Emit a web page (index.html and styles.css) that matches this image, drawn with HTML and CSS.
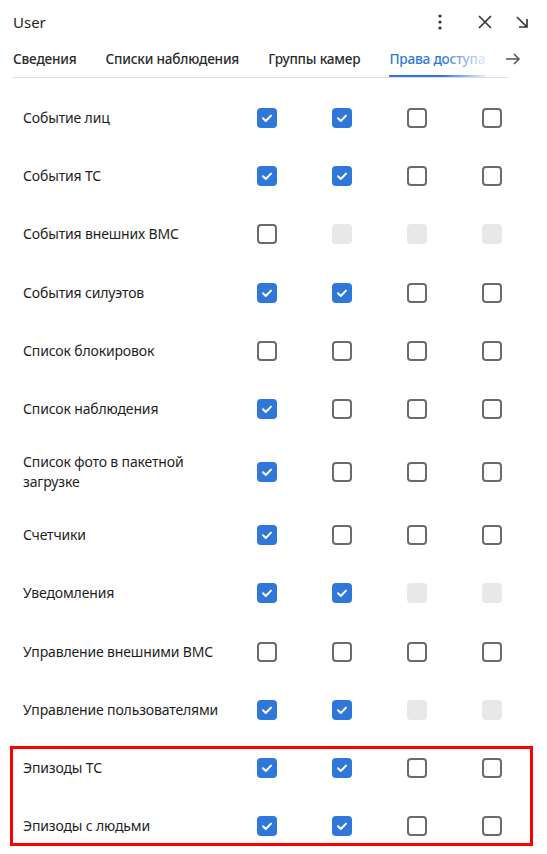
FILE: index.html
```html
<!DOCTYPE html>
<html lang="ru">
<head>
<meta charset="utf-8">
<title>User</title>
<link rel="stylesheet" href="styles.css">
</head>
<body>
<div class="panel">
  <header class="header">
    <div class="title">User</div>
    <div class="actions">
      <span class="icon icon-more">
        <svg width="24" height="24" viewBox="0 0 24 24"><circle cx="12" cy="6" r="1.6" fill="#333"/><circle cx="12" cy="12" r="1.6" fill="#333"/><circle cx="12" cy="18" r="1.6" fill="#333"/></svg>
      </span>
      <span class="icon icon-close">
        <svg width="24" height="24" viewBox="0 0 24 24"><path d="M6 6 L18 18 M18 6 L6 18" stroke="#333" stroke-width="1.6" fill="none"/></svg>
      </span>
      <span class="icon icon-dock">
        <svg width="24" height="24" viewBox="0 0 24 24"><path d="M7 7 L16.5 16.5 M17 9 V17 H9" stroke="#333" stroke-width="1.6" fill="none"/></svg>
      </span>
    </div>
  </header>

  <nav class="tabbar">
    <div class="tabs">
      <span class="tab">Сведения</span>
      <span class="tab">Списки наблюдения</span>
      <span class="tab">Группы камер</span>
      <span class="tab active">Права доступа</span>
    </div>
    <span class="tab-next">
      <svg width="18" height="18" viewBox="0 0 18 18"><path d="M2 9 H15 M10 4 L15 9 L10 14" stroke="#555" stroke-width="1.5" fill="none"/></svg>
    </span>
  </nav>

  <div class="rows">
    <div class="row"><span class="label">Событие лиц</span><span class="cb on"></span><span class="cb on"></span><span class="cb"></span><span class="cb"></span></div>
    <div class="row"><span class="label">События ТС</span><span class="cb on"></span><span class="cb on"></span><span class="cb"></span><span class="cb"></span></div>
    <div class="row"><span class="label">События внешних ВМС</span><span class="cb"></span><span class="cb off"></span><span class="cb off"></span><span class="cb off"></span></div>
    <div class="row"><span class="label">События силуэтов</span><span class="cb on"></span><span class="cb on"></span><span class="cb"></span><span class="cb"></span></div>
    <div class="row"><span class="label">Список блокировок</span><span class="cb"></span><span class="cb"></span><span class="cb"></span><span class="cb"></span></div>
    <div class="row"><span class="label">Список наблюдения</span><span class="cb on"></span><span class="cb"></span><span class="cb"></span><span class="cb"></span></div>
    <div class="row"><span class="label">Список фото в пакетной загрузке</span><span class="cb on"></span><span class="cb"></span><span class="cb"></span><span class="cb"></span></div>
    <div class="row"><span class="label">Счетчики</span><span class="cb on"></span><span class="cb"></span><span class="cb"></span><span class="cb"></span></div>
    <div class="row"><span class="label">Уведомления</span><span class="cb on"></span><span class="cb on"></span><span class="cb off"></span><span class="cb off"></span></div>
    <div class="row"><span class="label">Управление внешними ВМС</span><span class="cb"></span><span class="cb"></span><span class="cb"></span><span class="cb"></span></div>
    <div class="row"><span class="label">Управление пользователями</span><span class="cb on"></span><span class="cb on"></span><span class="cb off"></span><span class="cb off"></span></div>
    <div class="row"><span class="label">Эпизоды ТС</span><span class="cb on"></span><span class="cb on"></span><span class="cb"></span><span class="cb"></span></div>
    <div class="row"><span class="label">Эпизоды с людьми</span><span class="cb on"></span><span class="cb on"></span><span class="cb"></span><span class="cb"></span></div>
  </div>

  <div class="highlight"></div>
</div>
</body>
</html>
```

FILE: styles.css
```css
* { box-sizing: border-box; }

html, body {
  margin: 0;
  padding: 0;
  background: #ffffff;
}

body {
  font-family: "Noto Sans", "Open Sans", sans-serif;
  color: #1f1f1f;
  overflow: hidden;
}

.panel {
  position: relative;
  width: 547px;
  height: 854px;
}

.header {
  display: flex;
  align-items: center;
  justify-content: space-between;
  height: 44px;
  padding: 0 13px 0 13px;
}

.title {
  font-size: 15px;
  color: #1f1f1f;
}

.actions {
  display: flex;
  align-items: center;
}

.icon {
  display: flex;
  width: 24px;
  height: 24px;
}

.icon-close { margin-left: 21px; }
.icon-dock { margin-left: 13px; }

.tabbar {
  position: relative;
  margin: 0 13px;
  height: 34px;
  width: 495px;
}

.tabs {
  display: flex;
  gap: 29px;
  height: 34px;
  border-bottom: 1px solid #dcdcee;
  overflow: hidden;
  white-space: nowrap;
}

.tab {
  position: relative;
  flex: none;
  font-size: 13.6px;
  letter-spacing: -0.2px;
  font-weight: 500;
  color: #2b2b2b;
  line-height: 30px;
}

.tab.active {
  color: #2f77d9;
}

.tab.active::after {
  content: "";
  position: absolute;
  left: 0;
  right: 0;
  bottom: -1px;
  height: 3px;
  background: #2f77d9;
}

.tabbar::after {
  content: "";
  position: absolute;
  right: 0;
  top: 0;
  width: 66px;
  height: 33px;
  background: linear-gradient(to right, rgba(255,255,255,0), rgba(255,255,255,0.8) 60%, rgba(255,255,255,1));
  pointer-events: none;
}

.tab-next {
  position: absolute;
  right: -14px;
  top: 6px;
  width: 18px;
  height: 18px;
  display: flex;
  z-index: 2;
}

.rows {
  margin: 11px 0 0 13px;
  width: 517px;
}

.row {
  display: grid;
  grid-template-columns: 206.5px repeat(4, 75px);
  align-items: center;
  justify-items: center;
  min-height: 58.2px;
  padding: 14px 0 14px 10px;
}

.label {
  justify-self: start;
  font-size: 14px;
  letter-spacing: -0.15px;
  line-height: 20px;
  color: #1f1f1f;
}

.cb {
  width: 20px;
  height: 20px;
  border: 2px solid #6b6b6b;
  border-radius: 4px;
}

.cb.on {
  border: none;
  background: #2f77d9 url("data:image/svg+xml,%3Csvg xmlns='http://www.w3.org/2000/svg' width='20' height='20' viewBox='0 0 20 20'%3E%3Cpath d='M6 10.3 L8.8 13 L14 7.6' stroke='white' stroke-width='2' fill='none' stroke-linecap='round' stroke-linejoin='round'/%3E%3C/svg%3E") center / 20px 20px no-repeat;
}

.cb.off {
  border: none;
  background: #e8e8e8;
}

.highlight {
  position: absolute;
  left: 10px;
  top: 746px;
  width: 523px;
  height: 100px;
  border: 3px solid #ff0000;
  pointer-events: none;
}
```
